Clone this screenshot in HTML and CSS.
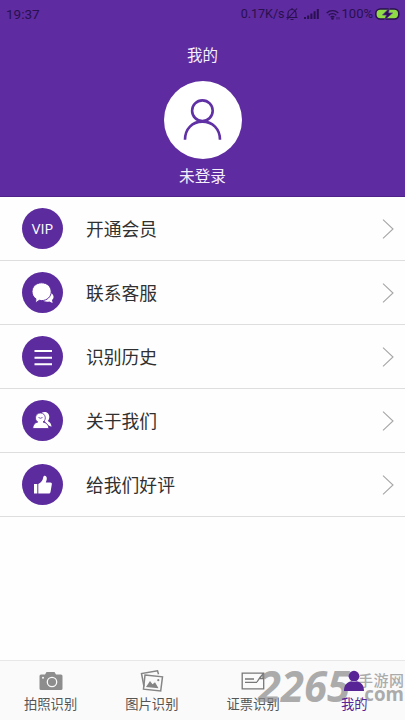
FILE: index.html
```
<!DOCTYPE html>
<html lang="zh-CN">
<head>
<meta charset="utf-8">
<title>我的</title>
<link rel="stylesheet" href="styles.css">
</head>
<body>
<div class="screen">
  <header class="hero">
    <div class="status">
      <span class="time">19:37</span>
      <div class="status-right">
        <span class="speed">0.17K/s</span>
        <svg class="bell" width="14" height="14" viewBox="0 0 14 14" fill="none" stroke="currentColor" stroke-width="1.1"><path d="M3 10.500V6.500a4 4 0 0 1 8 0v4M1.500 10.500h11M5.500 12.500h3M12 1.500 2 12.500M7 1v1.500"/></svg>
        <svg class="signal" width="15" height="10" viewBox="0 0 15 10" fill="currentColor"><path d="M0 8h2v2H0zM3.200 6.500h2V10h-2zM6.400 4.500h2V10h-2zM9.600 2.300h2V10h-2zM12.800 0h2v10h-2z"/></svg>
        <svg class="wifi" width="14" height="11" viewBox="0 0 14 11" fill="none" stroke="currentColor" stroke-width="1.300"><path d="M.7 4a8.500 8.500 0 0 1 11.600 0M2.700 6.200a5.500 5.500 0 0 1 7.600 0M4.600 8.200a2.800 2.800 0 0 1 3.800 0"/><circle cx="6.500" cy="9.500" r=".7"/><path d="M11 8v2.500M13 8v2.500" stroke-width=".8"/></svg>
        <span class="percent">100%</span>
        <svg class="battery" width="25" height="12" viewBox="0 0 25 12"><rect x=".8" y="1" width="23" height="10" rx="4.500" fill="#8fdc46" stroke="#29104f" stroke-width="1.600"/><path d="m14.500 0-7 7h4l-2 5 8-7h-4z" fill="#29104f" stroke="#5e2ba0" stroke-width=".7"/></svg>
      </div>
    </div>
    <h1 class="title">我的</h1>
    <div class="avatar">
      <svg width="78" height="78" viewBox="0 0 78 78" fill="none" stroke="#6030a5" stroke-width="2.600"><circle cx="38.400" cy="29.700" r="10.300"/><path d="M21 58.800c0-11 7.300-18.200 17.400-18.200S56 47.800 56 58.800"/></svg>
    </div>
    <div class="login">未登录</div>
  </header>
  <main class="menu">
    <div class="row">
      <span class="badge vip">VIP</span><span class="label">开通会员</span>
      <svg class="chevron" viewBox="0 0 12 20"><path d="m1 .7 10 9.300-10 9.300"/></svg>
    </div>
    <div class="row">
      <span class="badge"><svg width="40" height="40" viewBox="0 0 40 40"><path d="M27 19.500c4.500 2 4.300 6 2 7.500l.6 3-3.300-1.500c-3 .7-5.800-.2-7.300-2.300z" fill="#fff"/><path d="M18.600 9.800c5.600 0 9.600 4 9.600 8.900s-4 8.900-9.600 8.900c-.8 0-1.600-.1-2.300-.3L12.600 30l.3-4.200C10.500 24.200 9 21.700 9 18.700c0-4.900 4-8.900 9.600-8.900z" fill="#fff" stroke="#5c2b9e" stroke-width="1"/></svg></span><span class="label">联系客服</span>
      <svg class="chevron" viewBox="0 0 12 20"><path d="m1 .7 10 9.300-10 9.300"/></svg>
    </div>
    <div class="row">
      <span class="badge"><svg width="40" height="40" viewBox="0 0 40 40" fill="none" stroke="#fff" stroke-width="2"><path d="M11.500 14h17.500M11.500 20.700h17.500M11.500 27.300h17.500"/></svg></span><span class="label">识别历史</span>
      <svg class="chevron" viewBox="0 0 12 20"><path d="m1 .7 10 9.300-10 9.300"/></svg>
    </div>
    <div class="row">
      <span class="badge"><svg width="40" height="40" viewBox="0 0 40 40"><path d="M18 12.300c4-2.800 8.300-.3 8.300 3.400 0 2-.6 3.200-1.600 4.300 2.300 1.300 3.800 3 3.800 5.800l-3.500-1.500-5-6z" fill="#fff"/><path d="M9.800 27.500c0-3.800 1.900-5.600 5-6.500-1.500-1-2.300-2.300-2.300-4.100 0-2.900 2-4.900 4.900-4.900s4.900 2 4.900 4.900c0 1.800-.8 3.100-2.300 4.100 3.500.9 5.800 2.700 5.800 6.500z" fill="#fff" stroke="#5c2b9e" stroke-width=".8"/><path d="M15.500 16.500q2 1.500 4 0" fill="none" stroke="#5c2b9e" stroke-width=".8"/></svg></span><span class="label">关于我们</span>
      <svg class="chevron" viewBox="0 0 12 20"><path d="m1 .7 10 9.300-10 9.300"/></svg>
    </div>
    <div class="row">
      <span class="badge"><svg width="40" height="40" viewBox="0 0 40 40" fill="#fff"><path d="M11 19h3.300v9.500H11zM15.300 19c2.900-1.500 4.500-3.500 4.900-6.500.2-2.600 3.600-2.300 3.600.8 0 1.700-.5 3-1 4.200h4.500c1.300 0 1.800.7 1.500 2L27.500 27c-.3 1-.8 1.500-2 1.500H15.300z"/></svg></span><span class="label">给我们好评</span>
      <svg class="chevron" viewBox="0 0 12 20"><path d="m1 .7 10 9.300-10 9.300"/></svg>
    </div>
  </main>
  <nav class="tabs">
    <div class="tab">
      <svg width="26" height="24" viewBox="0 0 26 24"><path d="M3 4.500h4l1.500-2.500h8L18 4.500h5A1.500 1.500 0 0 1 24.500 6v12.500A1.500 1.500 0 0 1 23 20H3a1.500 1.500 0 0 1-1.500-1.500V6A1.500 1.500 0 0 1 3 4.500z" fill="#8d8d8d"/><circle cx="14" cy="12" r="4.700" fill="none" stroke="#fafafa" stroke-width="1.300"/><circle cx="5" cy="7.800" r="1" fill="#fafafa"/></svg>
      <span>拍照识别</span>
    </div>
    <div class="tab">
      <svg width="26" height="24" viewBox="0 0 26 24" fill="none" stroke="#858585" stroke-width="1.500"><path d="M5 16.500 2.500 3.500 18.500.8l1 3.500"/><path d="m6 5 17.500 1.800-1.800 14.200L4.500 19.200z"/><path d="m7 17 4-6 2.500 3.300 2.500-2 3.500 5.900z" fill="#858585" stroke="none"/><circle cx="19.300" cy="10.200" r="1.100" fill="#858585" stroke="none"/></svg>
      <span>图片识别</span>
    </div>
    <div class="tab">
      <svg width="26" height="24" viewBox="0 0 26 24" fill="none" stroke="#777" stroke-width="1.300"><path d="M2.200 3.200h21.500v15.600H2.200zM5 9h9M5 12.300h12M17 12l3-4.500 3-3.500v4.500h-4"/></svg>
      <span>证票识别</span>
    </div>
    <div class="tab active">
      <svg width="26" height="24" viewBox="0 0 26 24" fill="#572596"><circle cx="13" cy="6.200" r="5.400"/><path d="M3 21c0-5.800 2.300-8.300 7.200-9.800 1.800 1 3.800 1 5.600 0 4.900 1.500 7.200 4 7.200 9.800z"/></svg>
      <span>我的</span>
    </div>
  </nav>
  <svg class="watermark" width="155" height="60" viewBox="0 0 155 60">
    <text class="wm-number" x="8" y="42" textLength="92" lengthAdjust="spacingAndGlyphs">2265</text>
    <text class="wm-site" x="108" y="26" textLength="46">手游网</text>
    <text class="wm-com" x="109" y="41" textLength="45" lengthAdjust="spacingAndGlyphs">.com</text>
  </svg>
</div>
</body>
</html>
```
FILE: styles.css
```
* { box-sizing: border-box; }
body {
  margin: 0;
  font-family: "Noto Sans CJK SC", sans-serif;
}
.screen {
  position: relative;
  display: flex;
  flex-direction: column;
  width: 405px;
  height: 720px;
  overflow: hidden;
  background: #fefefe;
}
.hero {
  display: flex;
  flex-direction: column;
  align-items: center;
  height: 197px;
  color: #f5effc;
  background: #5e2ba0;
  border-bottom: 1px solid #4e2288;
}
.status {
  display: flex;
  justify-content: space-between;
  align-items: center;
  width: 100%;
  height: 28px;
  padding: 0 5px 0 6px;
  color: #29104f;
  font: 400 12.5px/28px Roboto, sans-serif;
}
.time { font-size: 13.5px; }
.speed { margin-right: -2px; }
.status-right { display: flex; align-items: center; }
.bell { margin-left: 2px; }
.signal { margin-left: 5px; }
.wifi { margin: 1px 2px 0 7px; }
.percent { font-size: 13px; }
.battery { margin-left: 2px; }
.title {
  margin: 14px 0 0;
  font-size: 15.5px;
  font-weight: 400;
  line-height: 24px;
}
.avatar {
  width: 78px;
  height: 78px;
  margin-top: 15px;
  border-radius: 50%;
  background: #fff;
}
.avatar svg { display: block; }
.login { margin-top: 5px; font-size: 15.7px; line-height: 24px; }
.row {
  display: flex;
  align-items: center;
  height: 64px;
  padding: 0 11px 0 22px;
  border-bottom: 1px solid #dedede;
}
.row:first-child { height: 64px; }
.badge {
  display: flex;
  align-items: center;
  justify-content: center;
  width: 41px;
  height: 41px;
  border-radius: 50%;
  color: #fff;
  background: #5c2b9e;
}
.vip { font: 400 14.5px "Open Sans", sans-serif; }
.label {
  flex: 1;
  margin-left: 23px;
  padding-bottom: 2px;
  color: #303030;
  font-size: 17.8px;
  line-height: 28px;
}
.chevron {
  width: 12px;
  height: 20px;
  fill: none;
  stroke: #a6a6a6;
  stroke-width: 1.1;
}
.tabs {
  display: grid;
  grid-template-columns: repeat(4, 1fr);
  height: 60px;
  margin-top: auto;
  border-top: 1px solid #e7e7e7;
  background: #fafafa;
}
.tab {
  display: flex;
  flex-direction: column;
  align-items: center;
  padding-top: 9px;
  color: #555;
  font-size: 13.3px;
  line-height: 19px;
}
.tab svg { flex: none; }
.active { position: relative; z-index: 2; color: #572596; }
.watermark {
  position: absolute;
  z-index: 1;
  right: 0;
  bottom: 0;
  fill: #8a8a8a;
  opacity: 0.7;
}
.wm-number { font: italic 700 43px "Open Sans", sans-serif; }
.wm-site { font: 500 15px "Noto Sans CJK SC", sans-serif; }
.wm-com { font: 700 20px "Open Sans", sans-serif; }
```
